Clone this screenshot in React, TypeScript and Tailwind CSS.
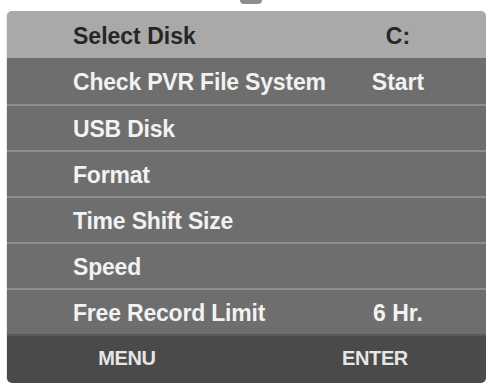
const rows: { label: string; value?: string }[] = [
  { label: 'Check PVR File System', value: 'Start' },
  { label: 'USB Disk' },
  { label: 'Format' },
  { label: 'Time Shift Size' },
  { label: 'Speed' },
  { label: 'Free Record Limit', value: '6 Hr.' },
];

export default function App() {
  return (
    <div className="w-[490px] h-[387px] bg-white flex flex-col font-['Liberation_Sans',Arial,sans-serif] font-bold">
      {/* bit of the frame above the menu */}
      <div className="ml-[240px] w-[22px] h-[4px] rounded-b-sm bg-[#707070] opacity-80" />

      <div className="mt-[7px] ml-[7px] w-[479px] h-[372px] rounded-[5px] overflow-hidden flex flex-col shadow-[-1px_0_0_#e8e8e8]">
        {/* Header row */}
        <div className="h-[47px] bg-[#a9a9a9] text-[#262626] flex items-center text-[23px] pt-[3px]">
          <span className="flex-1 pl-[66px]">Select Disk</span>
          <span className="w-[116px] mr-[30px] text-center">C:</span>
        </div>

        {rows.map((r, i) => (
          <div
            key={r.label}
            className={
              'h-[46px] bg-[#6e6e6e] text-[#f2f2f2] flex items-center text-[23px] pt-[3px] ' +
              (i === 0 ? '' : 'border-t-2 border-[#8f8f8f]')
            }
          >
            <span className="flex-1 pl-[66px] tracking-[-0.2px]">{r.label}</span>
            <span className="w-[116px] mr-[30px] text-center">{r.value}</span>
          </div>
        ))}

        {/* Footer */}
        <div className="flex-1 bg-[#4a4a4a] border-t-2 border-[#5a5a5a] text-[#e6e6e6] text-[20px] tracking-[-0.4px] flex items-center pb-[3px]">
          <span className="w-[240px] shrink-0 text-center">MENU</span>
          <span className="w-[256px] shrink-0 text-center">ENTER</span>
        </div>
      </div>
    </div>
  );
}
